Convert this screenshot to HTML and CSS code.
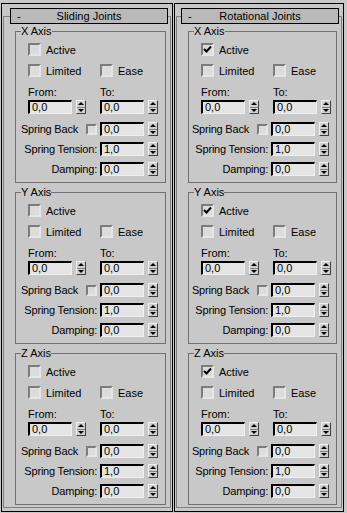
FILE: index.html
```html
<!DOCTYPE html>
<html lang="en">
<head>
  <meta charset="UTF-8">
  <title>Joint Parameters</title>
  <link rel="stylesheet" href="styles.css">
</head>
<body>

<div class="panel">
  <div class="column column-left">
    <div class="rollout">
      <div class="rollout-title"><span class="toggle">-</span><span class="title-text">Sliding Joints</span></div>
      <div class="axes" data-active="false"></div>
    </div>
  </div>

  <div class="column column-right">
    <div class="rollout">
      <div class="rollout-title"><span class="toggle">-</span><span class="title-text">Rotational Joints</span></div>
      <div class="axes" data-active="true"></div>
    </div>
  </div>
</div>

<script>
  const axisNames = ['X Axis', 'Y Axis', 'Z Axis'];

  function checkbox(checked) {
    let mark = '';
    if (checked) {
      mark = '<svg width="9" height="9" viewBox="0 0 9 9"><path d="M1 4 L3.5 6.5 L8 1.5" fill="none" stroke="#000" stroke-width="2"/></svg>';
    }
    return `<span class="check">${mark}</span>`;
  }

  function spinner(value) {
    return `<span class="field">${value}</span><span class="spinner"><span class="up"></span><span class="down"></span></span>`;
  }

  function axisGroup(name, active) {
    return `
      <div class="group">
        <div class="group-title">${name}</div>
        <div class="row row-active">${checkbox(active)}<span class="check-label">Active</span></div>
        <div class="row row-limit">
          ${checkbox(false)}<span class="check-label limited">Limited</span>
          ${checkbox(false)}<span class="check-label">Ease</span>
        </div>
        <div class="row row-labels"><span class="from">From:</span><span>To:</span></div>
        <div class="row row-range">
          ${spinner('0,0')}
          <span class="gap"></span>
          ${spinner('0,0')}
        </div>
        <div class="row param row-back">
          <span class="param-label">Spring Back</span>${checkbox(false)}${spinner('0,0')}
        </div>
        <div class="row param">
          <span class="param-label">Spring Tension:</span>${spinner('1,0')}
        </div>
        <div class="row param">
          <span class="param-label">Damping:</span>${spinner('0,0')}
        </div>
      </div>`;
  }

  document.querySelectorAll('.axes').forEach(el => {
    const active = el.dataset.active === 'true';
    el.innerHTML = axisNames.map(name => axisGroup(name, active)).join('');
  });
</script>

</body>
</html>
```

FILE: styles.css
```css
body {
  margin: 0;
  background: #c8c8c8;
  color: #000;
  font-family: "Liberation Sans", Arial, sans-serif;
  font-size: 11px;
}

.panel {
  display: flex;
  gap: 1px;
  padding: 3px 0 0 1px;
}

.column {
  border: 1px solid #000;
  height: 509px;
  box-sizing: border-box;
}

.column-left {
  width: 172px;
}

.column-right {
  width: 170px;
}

.rollout {
  border: 1px solid #808080;
  margin: 12px 1px 0 1px;
  padding-bottom: 2px;
}

.rollout-title {
  display: flex;
  align-items: center;
  height: 16px;
  box-sizing: border-box;
  margin: -9px 2px 0 6px;
  border: 1px solid #000;
  background: #b9b9b9;
  line-height: 14px;
  white-space: nowrap;
}

.column-right .rollout-title {
  margin-left: 4px;
}

.toggle {
  width: 20px;
  padding-left: 6px;
  box-sizing: border-box;
}

.title-text {
  flex: 1;
  text-align: center;
  padding-right: 20px;
}

.axes {
  padding: 7px 4px 0 11px;
}

.group {
  height: 152px;
  box-sizing: border-box;
  border: 1px solid #707070;
  margin-bottom: 9px;
}

.group:last-child {
  margin-bottom: 0;
}

.group-title {
  width: fit-content;
  margin: -7px 0 0 5px;
  background: #c8c8c8;
  line-height: 13px;
}

.row {
  display: flex;
  align-items: center;
  height: 13px;
  padding-left: 12px;
  white-space: nowrap;
}

.row > * {
  flex-shrink: 0;
}

.row-active {
  margin-top: 5px;
}

.row-limit {
  margin-top: 8px;
}

.row-labels {
  margin-top: 8px;
}

.row-range {
  margin-top: 2px;
  height: 14px;
}

.row-back {
  margin-top: 8px;
}

.param {
  height: 14px;
  justify-content: flex-end;
  padding-right: 7px;
  letter-spacing: -0.2px;
}

.param + .param {
  margin-top: 6px;
}

.check {
  display: flex;
  align-items: center;
  justify-content: center;
  width: 13px;
  height: 13px;
  box-sizing: border-box;
  border: 2px solid;
  border-color: #7c7c7c #e6e6e6 #e6e6e6 #7c7c7c;
  background: #dcdcdc;
}

.check-label {
  margin-left: 5px;
}

.limited {
  width: 54px;
}

.from {
  width: 72px;
}

.field {
  width: 44px;
  height: 14px;
  box-sizing: border-box;
  border: 1px solid;
  border-width: 2px 1px 1px 2px;
  border-color: #000 #f0f0f0 #f0f0f0 #000;
  background: #e4e4e4;
  padding-left: 2px;
  line-height: 11px;
  letter-spacing: 0;
}

.spinner {
  display: flex;
  flex-direction: column;
  width: 10px;
  height: 14px;
  margin-left: 4px;
  box-sizing: border-box;
  border: 1px solid;
  border-color: #f0f0f0 #404040 #404040 #f0f0f0;
  background: #d0d0d0;
}

.spinner span {
  flex: 1;
  display: flex;
  align-items: center;
  justify-content: center;
}

.spinner .up {
  border-bottom: 1px solid #808080;
}

.spinner .up::after {
  content: "";
  border-left: 3px solid transparent;
  border-right: 3px solid transparent;
  border-bottom: 3px solid #000;
}

.spinner .down::after {
  content: "";
  border-left: 3px solid transparent;
  border-right: 3px solid transparent;
  border-top: 3px solid #000;
}

.gap {
  width: 14px;
}

.param-label {
  margin-right: 3px;
}

.row-back .param-label {
  margin-right: 8px;
}

.row-back .check {
  width: 11px;
  height: 11px;
  margin-right: 3px;
}
```
